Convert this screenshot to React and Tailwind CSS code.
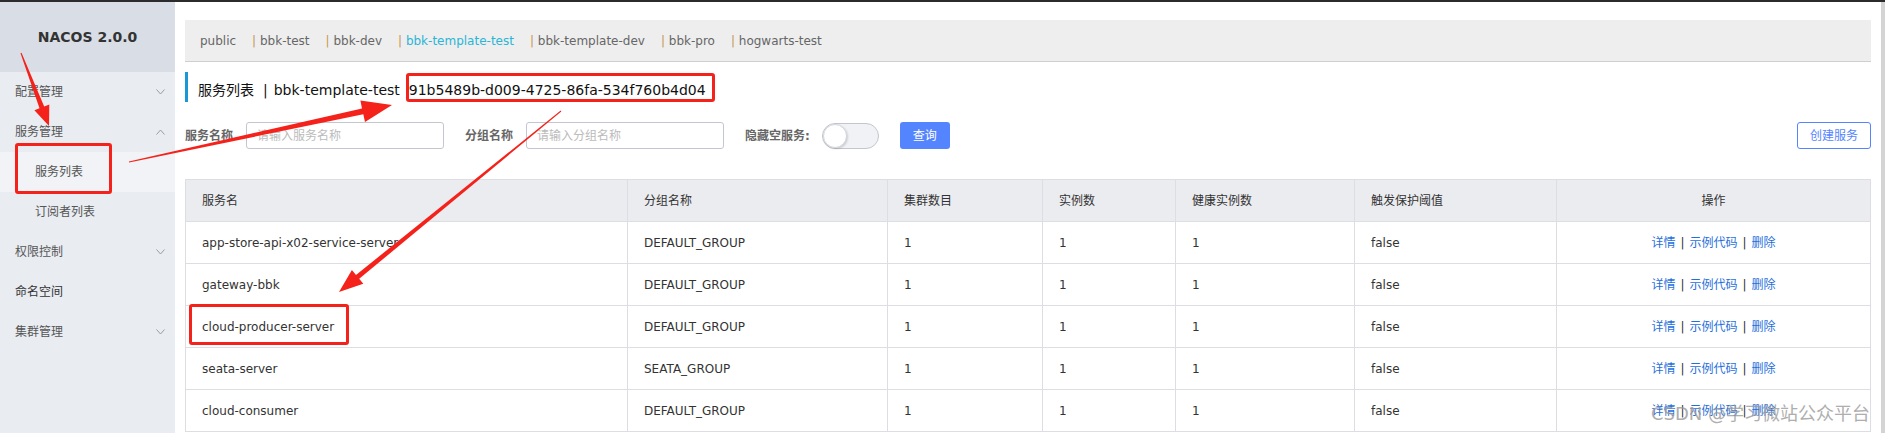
import React from "react";

const FONT = "font-['DejaVu_Sans','Noto_Sans_CJK_SC',sans-serif]";

function arrowPts(x1, y1, x2, y2, w1, w2, hl, hw) {
  const dx = x2 - x1, dy = y2 - y1, L = Math.hypot(dx, dy);
  const ux = dx / L, uy = dy / L, nx = -uy, ny = ux;
  const bx = x2 - ux * hl, by = y2 - uy * hl;
  const p = [
    [x1 + (nx * w1) / 2, y1 + (ny * w1) / 2],
    [bx + (nx * w2) / 2, by + (ny * w2) / 2],
    [bx + (nx * hw) / 2, by + (ny * hw) / 2],
    [x2, y2],
    [bx - (nx * hw) / 2, by - (ny * hw) / 2],
    [bx - (nx * w2) / 2, by - (ny * w2) / 2],
    [x1 - (nx * w1) / 2, y1 - (ny * w1) / 2],
  ];
  return p.map((q) => q.map((v) => v.toFixed(1)).join(",")).join(" ");
}

function Chevron({ up }) {
  return (
    <svg width="9" height="6" viewBox="0 0 9 6" className="shrink-0">
      <path
        d={up ? "M0.5 5.5 L4.5 1 L8.5 5.5" : "M0.5 0.5 L4.5 5 L8.5 0.5"}
        fill="none"
        stroke="#9a9ca3"
        strokeWidth="1"
      />
    </svg>
  );
}

function MenuItem({ label, chevron, up, dark }) {
  return (
    <div className="h-[40px] flex items-center justify-between pl-[15px] pr-[10px]">
      <span className={dark ? "text-[12px] text-[#333]" : "text-[12px] text-[#555]"}>{label}</span>
      {chevron && <Chevron up={up} />}
    </div>
  );
}

const namespaces = ["bbk-test", "bbk-dev", "bbk-template-test", "bbk-template-dev", "bbk-pro", "hogwarts-test"];

const rows = [
  ["app-store-api-x02-service-server", "DEFAULT_GROUP"],
  ["gateway-bbk", "DEFAULT_GROUP"],
  ["cloud-producer-server", "DEFAULT_GROUP"],
  ["seata-server", "SEATA_GROUP"],
  ["cloud-consumer", "DEFAULT_GROUP"],
];

const headers = ["服务名", "分组名称", "集群数目", "实例数", "健康实例数", "触发保护阈值"];

export default function App() {
  return (
    <div className={`relative w-[1885px] h-[433px] overflow-hidden bg-white ${FONT}`}>
      <div className="h-[2px] bg-[#2b2b2b]" />
      <div className="flex h-[431px]">
        {/* Sidebar */}
        <div className="w-[175px] shrink-0 bg-[#e9ecf1] flex flex-col">
          <div className="h-[70px] bg-[#d9dde5] flex items-center justify-center">
            <span className="text-[14px] font-bold text-[#333] tracking-normal">NACOS 2.0.0</span>
          </div>
          <MenuItem label="配置管理" chevron />
          <MenuItem label="服务管理" chevron up />
          <div className="h-[40px] flex items-center pl-[35px] bg-[#f1f3f6]">
            <span className="text-[12px] text-[#555]">服务列表</span>
          </div>
          <div className="h-[40px] flex items-center pl-[35px]">
            <span className="text-[12px] text-[#555]">订阅者列表</span>
          </div>
          <MenuItem label="权限控制" chevron />
          <MenuItem label="命名空间" dark />
          <MenuItem label="集群管理" chevron />
        </div>

        {/* Main */}
        <div className="flex-1 flex">
          <div className="flex-1 pl-[10px] pr-[10px] pt-[18px]">
            {/* namespace bar */}
            <div className="h-[42px] bg-[#eeeeee] border-b border-[#cfcfcf] flex items-center pl-[15px] gap-[16px] text-[12px]">
              <span className="text-[#666]">public</span>
              {namespaces.map((n) => (
                <span key={n} className="whitespace-nowrap">
                  <span className="text-[#c8964f]">| </span>
                  <span className={n === "bbk-template-test" ? "text-[#2bb5d6]" : "text-[#666]"}>{n}</span>
                </span>
              ))}
            </div>

            {/* title */}
            <div className="mt-[10px] h-[30px] border-l-[3px] border-[#1a98d5] pl-[10px] pt-[6px] flex items-center text-[14px] text-[#111]">
              <span>服务列表</span>
              <span className="ml-[9px] mr-[6px]">|</span>
              <span>bbk-template-test</span>
              <span className="ml-[9px]">91b5489b-d009-4725-86fa-534f760b4d04</span>
            </div>

            {/* filter row */}
            <div className="mt-[20px] h-[27px] flex items-center text-[12px]">
              <span className="font-bold text-[#666]">服务名称</span>
              <div className="ml-[13px] w-[198px] h-[27px] border border-[#c4c6cf] rounded-[3px] flex items-center pl-[10px] text-[#bbb]">
                请输入服务名称
              </div>
              <span className="ml-[21px] font-bold text-[#666]">分组名称</span>
              <div className="ml-[13px] w-[198px] h-[27px] border border-[#c4c6cf] rounded-[3px] flex items-center pl-[10px] text-[#bbb]">
                请输入分组名称
              </div>
              <span className="ml-[21px] font-bold text-[#666]">隐藏空服务:</span>
              <div className="ml-[12px] w-[57px] h-[26px] rounded-full border border-[#c4c6cf] bg-[#f1f2f6] flex items-center">
                <div className="w-[24px] h-[24px] rounded-full bg-white border border-[#d4d6dc] shadow-[1px_1px_2px_rgba(0,0,0,0.15)]" />
              </div>
              <div className="ml-[21px] w-[50px] h-[27px] rounded-[3px] bg-[#5584ff] text-white flex items-center justify-center">
                查询
              </div>
              <div className="ml-auto w-[74px] h-[27px] rounded-[3px] border border-[#5584ff] text-[#5584ff] flex items-center justify-center">
                创建服务
              </div>
            </div>

            {/* table */}
            <table className="mt-[30px] w-full table-fixed border-collapse text-[12px] text-[#333]">
              <colgroup>
                <col className="w-[442px]" />
                <col className="w-[260px]" />
                <col className="w-[155px]" />
                <col className="w-[133px]" />
                <col className="w-[179px]" />
                <col className="w-[202px]" />
                <col className="w-[314px]" />
              </colgroup>
              <thead>
                <tr className="h-[42px] bg-[#ebecf0]">
                  {headers.map((h) => (
                    <th key={h} className="border border-[#dcdee3] px-[16px] text-left font-normal">
                      {h}
                    </th>
                  ))}
                  <th className="border border-[#dcdee3] px-[16px] text-center font-normal">操作</th>
                </tr>
              </thead>
              <tbody>
                {rows.map(([name, group]) => (
                  <tr key={name} className="h-[42px]">
                    <td className="border border-[#dcdee3] px-[16px] whitespace-nowrap overflow-hidden">{name}</td>
                    <td className="border border-[#dcdee3] px-[16px]">{group}</td>
                    <td className="border border-[#dcdee3] px-[16px]">1</td>
                    <td className="border border-[#dcdee3] px-[16px]">1</td>
                    <td className="border border-[#dcdee3] px-[16px]">1</td>
                    <td className="border border-[#dcdee3] px-[16px]">false</td>
                    <td className="border border-[#dcdee3] px-[16px] text-center whitespace-nowrap">
                      <span className="text-[#1f6fdc]">详情</span>
                      <span className="mx-[5px] text-[#333]">|</span>
                      <span className="text-[#1f6fdc]">示例代码</span>
                      <span className="mx-[5px] text-[#333]">|</span>
                      <span className="text-[#1f6fdc]">删除</span>
                    </td>
                  </tr>
                ))}
              </tbody>
            </table>
          </div>
          <div className="w-[5px] shrink-0 bg-[#d4d4d4]" />
        </div>
      </div>

      {/* annotation overlay */}
      <svg className="absolute left-0 top-0 pointer-events-none" width="1885" height="433">
        <polygon points={arrowPts(21, 53, 49, 126, 1, 5, 20, 16)} fill="#f5221b" />
        <polygon points={arrowPts(129, 162, 392, 105, 1, 6, 30, 22)} fill="#f5221b" />
        <polygon points={arrowPts(561, 111, 339, 292, 1, 5, 24, 18)} fill="#f5221b" />
      </svg>
      <div className="absolute left-[15px] top-[143px] w-[97px] h-[51px] border-[3px] border-[#f5221b] rounded-[3px] pointer-events-none" />
      <div className="absolute left-[406px] top-[73px] w-[309px] h-[29px] border-[3px] border-[#f5221b] rounded-[3px] pointer-events-none" />
      <div className="absolute left-[189px] top-[304px] w-[160px] h-[41px] border-[3px] border-[#f5221b] rounded-[3px] pointer-events-none" />
      <div className="absolute right-[15px] bottom-[10px] text-[18px] leading-none text-[#9a9a9a] opacity-80 pointer-events-none whitespace-nowrap">
        CSDN @学习微站公众平台
      </div>
    </div>
  );
}
